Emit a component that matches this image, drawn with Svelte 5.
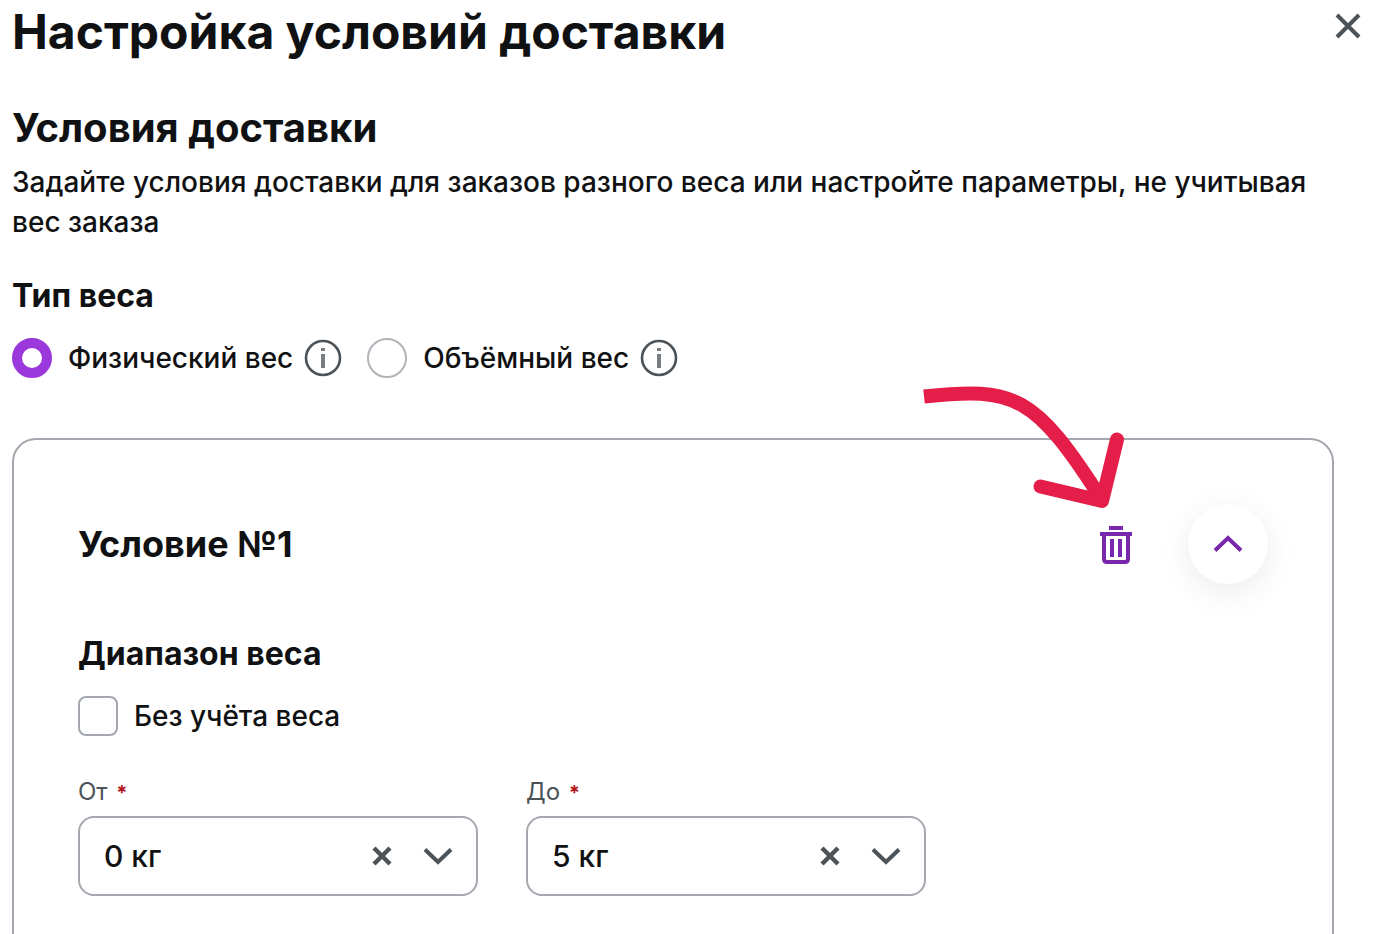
<script>
	let weightType = 'physical';
	let ignoreWeight = false;

	const types = [
		{ value: 'physical', label: 'Физический вес' },
		{ value: 'volume', label: 'Объёмный вес' }
	];

	let fields = [
		{ id: 'from', label: 'От', value: '0 кг', options: ['0 кг', '1 кг', '5 кг'] },
		{ id: 'to', label: 'До', value: '5 кг', options: ['5 кг', '10 кг', '15 кг'] }
	];
</script>

<main class="modal">
	<header class="header">
		<h1>Настройка условий доставки</h1>
		<button class="icon-button close" type="button" aria-label="Закрыть">
			<svg width="26" height="26" viewBox="0 0 26 26">
				<path d="M2 2l22 22M24 2L2 24" fill="none" stroke="currentColor" stroke-width="4" />
			</svg>
		</button>
	</header>

	<div class="content">
		<h2>Условия доставки</h2>
		<p class="description">
			Задайте условия доставки для заказов разного веса или настройте параметры, не учитывая вес
			заказа
		</p>

		<h3 id="weight-type">Тип веса</h3>
		<div class="radios" role="radiogroup" aria-labelledby="weight-type">
			{#each types as type}
				<div class="option">
					<label class="choice">
						<input class="radio" type="radio" name="type" value={type.value} bind:group={weightType} />
						{type.label}
					</label>
					<button class="icon-button info" type="button" aria-label="Подробнее">
						<svg width="40" height="40" viewBox="0 0 40 40">
							<circle cx="20" cy="20" r="17" fill="none" stroke="#4b5359" stroke-width="2.6" />
							<path d="M18 10h4v3h-4zM18 16h4v14h-4z" fill="#777d82" />
						</svg>
					</button>
				</div>
			{/each}
		</div>

		<section class="card">
			<div class="card-header">
				<h2 class="card-title">Условие №1</h2>
				<div class="actions">
					<div class="remove">
						<button class="icon-button trash" type="button" aria-label="Удалить">
							<svg width="40" height="40" viewBox="0 0 40 40">
								<path d="M13 2h14v4H13zM4 8h32v4H4zM14 15h4v18h-4zM22 15h4v18h-4z" fill="currentColor" />
								<path d="M8 10v25q0 3 3 3h18q3 0 3-3V10" fill="none" stroke="currentColor" stroke-width="4" />
							</svg>
						</button>
						<svg class="arrow" width="204" height="134" viewBox="0 0 204 134" aria-hidden="true">
							<g fill="none" stroke="#e41e49" stroke-width="14">
								<path d="M4 16.5C95 6.5 115 15 182 120" />
								<path d="M120.5 106.5l61.5 14.5L197 59.5" stroke-linecap="round" stroke-linejoin="round" />
							</g>
						</svg>
					</div>
					<button class="icon-button collapse" type="button" aria-label="Свернуть">
						<svg width="32" height="32" viewBox="0 0 32 32">
							<path d="M3 22.5L16 10l13 12.5" fill="none" stroke="currentColor" stroke-width="4" />
						</svg>
					</button>
				</div>
			</div>

			<h3>Диапазон веса</h3>
			<label class="choice">
				<input class="checkbox" type="checkbox" bind:checked={ignoreWeight} />
				Без учёта веса
			</label>

			<div class="fields">
				{#each fields as field}
					<div class="field">
						<label class="field-label" for={field.id}>{field.label} <span class="required">*</span></label>
						<div class="control">
							<select id={field.id} bind:value={field.value}>
								{#each field.options as option}
									<option>{option}</option>
								{/each}
							</select>
							<button class="icon-button clear" type="button" aria-label="Очистить">
								<svg width="20" height="20" viewBox="0 0 20 20">
									<path d="M2 2l16 16M18 2L2 18" fill="none" stroke="currentColor" stroke-width="4.5" />
								</svg>
							</button>
							<svg class="chevron" width="32" height="32" viewBox="0 0 32 32" aria-hidden="true">
								<path d="M3 9.5L16 22 29 9.5" fill="none" stroke="currentColor" stroke-width="4" />
							</svg>
						</div>
					</div>
				{/each}
			</div>
		</section>
	</div>
</main>

<style>
	:global(body) {
		background: #fff;
		overflow: hidden;
	}
	.modal {
		padding: 0 12px;
		color: #101112;
		font-family: Inter, 'Liberation Sans', sans-serif;
		font-size: 28px;
		font-weight: 500;
		line-height: 40px;
	}
	h1,
	h2,
	h3,
	p {
		margin: 0;
	}
	h1 {
		font-size: 48px;
		line-height: 64px;
		font-weight: 700;
	}
	h2 {
		font-size: 40px;
		line-height: 48px;
		font-weight: 700;
	}
	h3 {
		font-size: 32px;
		line-height: 40px;
		font-weight: 700;
	}
	.header {
		display: flex;
		justify-content: space-between;
		align-items: flex-start;
	}
	.icon-button {
		display: flex;
		align-items: center;
		justify-content: center;
		flex: none;
		padding: 0;
		border: 0;
		background: none;
		color: #4b5359;
		cursor: pointer;
	}
	.close {
		width: 30px;
		height: 52px;
	}
	.content {
		padding: 40px 29px 0 0;
	}
	.description {
		margin: 10px 0 34px;
	}
	.radios {
		display: flex;
		gap: 24px;
		margin: 22px 0 60px;
	}
	.option {
		display: flex;
		align-items: center;
		gap: 10px;
	}
	.choice {
		display: flex;
		align-items: center;
		gap: 16px;
	}
	.radio,
	.checkbox {
		appearance: none;
		flex: none;
		box-sizing: border-box;
		width: 40px;
		height: 40px;
		margin: 0;
		border: 2px solid #b0b4b9;
		background: #fff;
	}
	.radio {
		border-radius: 50%;
	}
	.radio:checked {
		border: 10px solid #9a38dc;
	}
	.checkbox {
		border-color: #a3a8ae;
		border-radius: 8px;
	}
	.card {
		padding: 64px 64px 80px;
		border: 2px solid #a3a8ae;
		border-radius: 24px;
	}
	.card-header {
		display: flex;
		align-items: center;
		justify-content: space-between;
		margin-bottom: 50px;
	}
	.card-title {
		font-size: 36px;
	}
	.actions {
		display: flex;
		align-items: center;
		gap: 52px;
		color: #7828ac;
	}
	.remove {
		position: relative;
	}
	.trash {
		color: inherit;
	}
	.arrow {
		position: absolute;
		right: 12px;
		bottom: 50px;
		pointer-events: none;
	}
	.collapse {
		width: 80px;
		height: 80px;
		border-radius: 50%;
		background: #fff;
		color: inherit;
		box-shadow: 0 8px 32px rgba(0, 0, 0, 0.08);
	}
	.card .choice {
		margin: 22px 0 36px;
	}
	.fields {
		display: flex;
		gap: 48px;
	}
	.field {
		flex: 0 1 400px;
	}
	.field-label {
		display: block;
		margin-bottom: 4px;
		color: #4b5359;
		font-size: 24px;
		font-weight: 400;
	}
	.required {
		margin-left: 2px;
		color: #b3161d;
		font-size: 20px;
		font-weight: 700;
		line-height: 20px;
	}
	.control {
		display: flex;
		align-items: center;
		box-sizing: border-box;
		height: 80px;
		padding: 0 22px 0 24px;
		border: 2px solid #a3a8ae;
		border-radius: 16px;
		color: #4b5359;
	}
	select {
		appearance: none;
		flex: 1;
		min-width: 0;
		height: 76px;
		padding: 0;
		border: 0;
		background: none;
		color: #101112;
		font: inherit;
		font-size: 30px;
		font-weight: 500;
	}
	.clear {
		margin-right: 30px;
	}
</style>
